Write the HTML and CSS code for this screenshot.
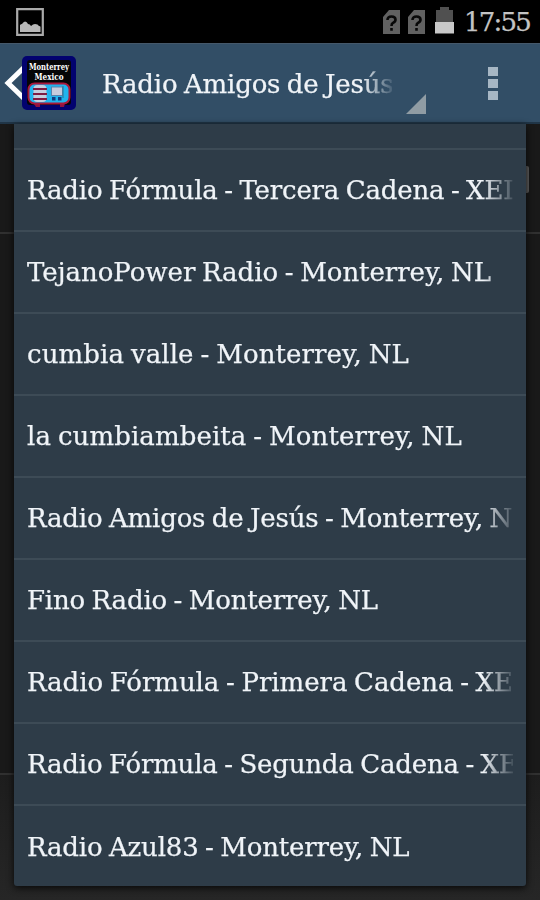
FILE: index.html
```html
<!DOCTYPE html>
<html lang="es">
<head>
  <meta charset="utf-8">
  <meta name="viewport" content="width=device-width, initial-scale=1.0">
  <title>Radio Monterrey</title>
  <link rel="stylesheet" href="styles.css">
</head>
<body>
  <div class="status">
    <svg class="picture" width="28" height="28" viewBox="0 0 28 28">
      <path d="M1.200 1.200h25.600v25.600H1.200z" fill="none" stroke="#aaa" stroke-width="2.200"/>
      <path d="M4 24v-7q1-1 2-1q1-2 3-2.500q2 0 3 2.500q2 0 3 2q2-2 4-2q3 0 4 2q1.500 0 1.500 1v5z" fill="#b8b8b8"/>
    </svg>
    <div class="status-right">
      <svg width="17" height="24" viewBox="0 0 17 24">
        <path d="M6 0h11v24H0V7z" fill="#616161"/>
        <path d="M4.500 10q0-3.500 4-3.500t4 3.200q0 2-2.500 3.200q-1.500.8-1.500 3M8.500 18v2.800" fill="none" stroke="#080808" stroke-width="2.600"/>
      </svg>
      <svg width="17" height="24" viewBox="0 0 17 24">
        <path d="M6 0h11v24H0V7z" fill="#616161"/>
        <path d="M4.500 10q0-3.500 4-3.500t4 3.200q0 2-2.500 3.200q-1.500.8-1.500 3M8.500 18v2.800" fill="none" stroke="#080808" stroke-width="2.600"/>
      </svg>
      <svg class="battery" width="19" height="27" viewBox="0 0 19 27">
        <path d="M1 3h4V0h9v3h4v13H1z" fill="#505050"/>
        <path d="M0 15h19v11.500H0z" fill="#c8c8c8"/>
      </svg>
      <span class="clock">17:55</span>
    </div>
  </div>

  <div class="bar">
    <svg class="back" width="18" height="36" viewBox="0 0 18 36">
      <path d="M20 2.500L4 18l16 15.500" fill="none" stroke="#fff" stroke-width="5"/>
    </svg>
    <svg class="logo" width="54" height="54" viewBox="0 0 54 54">
      <rect width="54" height="54" rx="5" fill="#02026f"/>
      <rect x="5" y="4" width="44" height="45" rx="3" fill="#050507"/>
      <text class="logo-text" x="27" y="14" textLength="40" lengthAdjust="spacingAndGlyphs">Monterrey</text>
      <text class="logo-text" x="27" y="24" textLength="29" lengthAdjust="spacingAndGlyphs">Mexico</text>
      <path d="M12 48l2 3h4v-4M38 47v4h4l1-4" fill="#8e1242"/>
      <rect x="6.500" y="27.500" width="41" height="20" rx="6" fill="#20b4ee" stroke="#a9183b" stroke-width="2"/>
      <rect x="11.500" y="29" width="13" height="17" rx="4" fill="#c5cedd"/>
      <path d="M11 33h14M11 38h14M11 43h14" stroke="#7d1d42" stroke-width="1.800"/>
      <rect x="29.500" y="31" width="11" height="8.500" fill="#c6cbdd" stroke="#5a83ad"/>
      <path d="M41 30v12" stroke="#287596"/>
      <path d="M30 41h3.500v3.500H30zM36 41h3.500v3.500H36z" fill="#123a80"/>
    </svg>
    <div class="title">Radio Amigos de Jesús</div>
    <svg class="arrow" width="20" height="20" viewBox="0 0 20 20">
      <path d="M20 0v20H0z" fill="#909ca4"/>
    </svg>
    <div class="more"><i></i><i></i><i></i></div>
  </div>

  <div class="content">
    <div class="panel top"><span class="field"></span></div>
    <div class="panel middle"></div>
    <div class="panel bottom"></div>
    <ul class="menu">
      <li class="cut"></li>
      <li><span>Radio Fórmula - Tercera Cadena - XEI</span></li>
      <li><span class="wide">TejanoPower Radio - Monterrey, NL</span></li>
      <li><span class="wider">cumbia valle - Monterrey, NL</span></li>
      <li><span class="wider">la cumbiambeita - Monterrey, NL</span></li>
      <li><span>Radio Amigos de Jesús - Monterrey, N</span></li>
      <li><span>Fino Radio - Monterrey, NL</span></li>
      <li><span class="wide">Radio Fórmula - Primera Cadena - XE</span></li>
      <li><span>Radio Fórmula - Segunda Cadena - XE</span></li>
      <li><span>Radio Azul83 - Monterrey, NL</span></li>
    </ul>
  </div>
</body>
</html>
```

FILE: styles.css
```css
* {
  box-sizing: border-box;
}

body {
  margin: 0;
  width: 540px;
  height: 900px;
  overflow: hidden;
  background: #191919;
  color: #f0f4f8;
  font-family: "DejaVu Serif", serif;
  font-size: 26px;
  letter-spacing: -0.18px;
  word-spacing: -1.5px;
  -webkit-text-stroke: 0.25px;
}

svg {
  display: block;
  flex: none;
}

.status {
  height: 43px;
  padding: 0 10px 0 16px;
  display: flex;
  align-items: center;
  justify-content: space-between;
  background: #000;
}

.status-right {
  display: flex;
  align-items: center;
  gap: 8px;
}

.battery {
  margin-left: 2px;
  margin-top: -3px;
}

.clock {
  width: 66px;
  margin-left: 2px;
  padding-top: 1px;
  color: #c4c4c4;
  letter-spacing: -1.8px;
}

.bar {
  height: 81px;
  padding-left: 4px;
  display: flex;
  align-items: center;
  background: #324e66;
  border-top: 1px solid #45586a;
  border-bottom: 2px solid #203547;
}

.title {
  width: 290px;
  margin-left: 26px;
  padding-top: 2px;
  overflow: hidden;
  white-space: nowrap;
  -webkit-mask-image: linear-gradient(to right, #000 260px, transparent 294px);
  mask-image: linear-gradient(to right, #000 260px, transparent 294px);
}

.arrow {
  align-self: flex-end;
  margin-left: 14px;
  margin-bottom: 8px;
}

.more {
  margin-left: 62px;
  display: flex;
  flex-direction: column;
  gap: 3px;
}

.more i {
  width: 10px;
  height: 9px;
  background: #a7b7c4;
}

.content {
  position: relative;
  height: 776px;
}

.panel {
  border-bottom: 2px solid #303030;
}

.top {
  height: 110px;
  padding: 42px 11px 0 0;
  display: flex;
  justify-content: flex-end;
}

.field {
  width: 16px;
  height: 27px;
  border-radius: 2px;
  background: #606060;
}

.middle {
  height: 541px;
}

.bottom {
  height: 125px;
  border: 0;
  background: linear-gradient(#1d1d1d, #262626);
}

.menu {
  position: absolute;
  left: 14px;
  top: 0;
  width: 512px;
  height: 762px;
  margin: 0;
  padding: 0;
  list-style: none;
  background: #2e3c48;
  border-radius: 0 0 3px 3px;
  box-shadow: 0 2px 7px #080808;
}

.menu li {
  height: 82px;
  padding-left: 13px;
  display: flex;
  align-items: center;
  border-bottom: 2px solid #3d4b56;
}

.menu .cut {
  height: 26px;
}

.menu li:last-child {
  border: 0;
}

.menu span {
  width: 486px;
  overflow: hidden;
  white-space: nowrap;
  -webkit-mask-image: linear-gradient(to right, #000 456px, transparent 490px);
  mask-image: linear-gradient(to right, #000 456px, transparent 490px);
}

.wide {
  letter-spacing: -0.05px;
}

.wider {
  letter-spacing: 0.1px;
}

.logo-text {
  font-family: "DejaVu Serif", serif;
  font-size: 9px;
  font-weight: bold;
  fill: #fff;
  text-anchor: middle;
  letter-spacing: 0;
  word-spacing: 0;
}
```
